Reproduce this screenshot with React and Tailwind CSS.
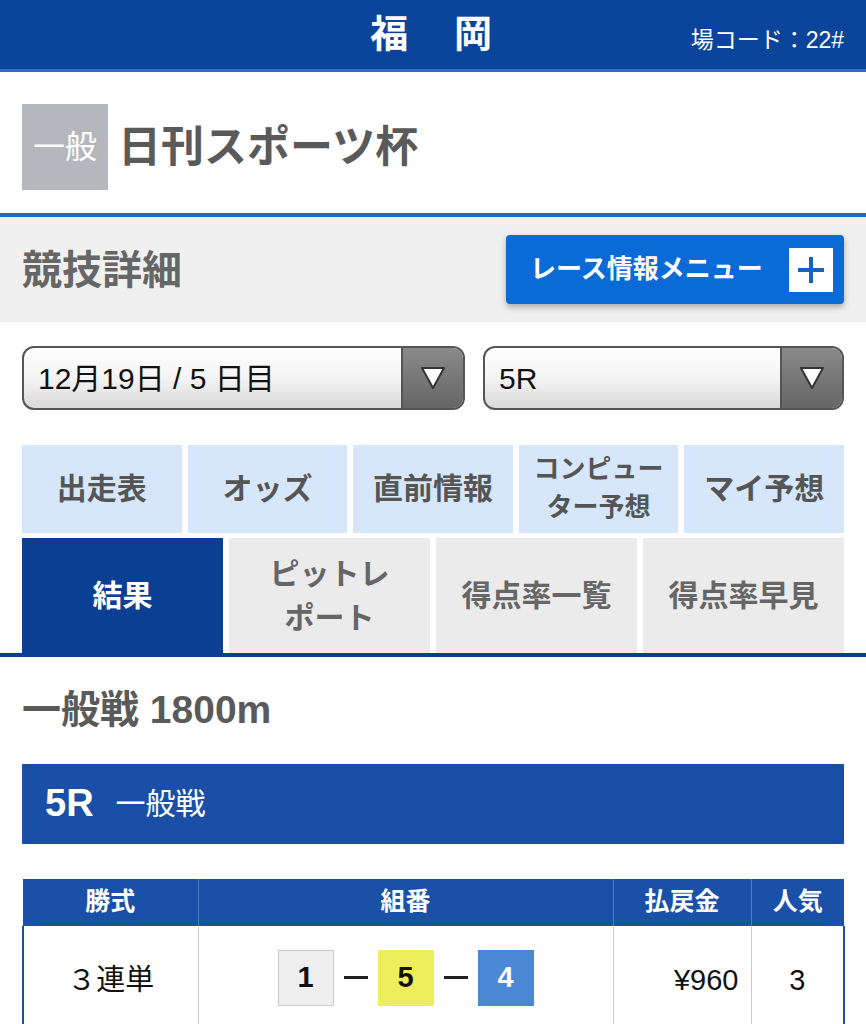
import React from "react";

const FONT = "font-['Liberation_Sans','Noto_Sans_CJK_JP',sans-serif]";

function Select({ label, className }) {
  return (
    <div
      className={`flex h-[64px] overflow-hidden rounded-[12px] border-2 border-[#555] bg-gradient-to-b from-white via-[#f4f4f4] to-[#d9d9d9] ${className}`}
    >
      <div className="flex flex-1 items-center pl-[14px] text-[30px] text-[#111]">{label}</div>
      <div className="flex w-[62px] items-center justify-center border-l-2 border-[#555] bg-gradient-to-b from-[#8a8a8a] to-[#666]">
        <svg width="28" height="26" viewBox="0 0 28 26">
          <polygon points="3,3 25,3 14,23" fill="#fff" stroke="#333" strokeWidth="2" strokeLinejoin="round" />
        </svg>
      </div>
    </div>
  );
}

function TabCell({ children, className = "" }) {
  return (
    <div className={`flex items-center justify-center text-center font-bold leading-[1.45] ${className}`}>
      {children}
    </div>
  );
}

export default function App() {
  return (
    <div className={`${FONT} w-[866px] bg-white`}>
      {/* Header */}
      <div className="relative flex h-[72px] items-center justify-center border-b-[3px] border-[#2b6cc4] bg-[#0b459b]">
        <div className="text-[38px] font-bold tracking-[0.1em] text-white">福　岡</div>
        <div className="absolute right-[22px] top-[23px] text-[23px] text-white">場コード：22#</div>
      </div>

      {/* Race title */}
      <div className="flex items-center gap-[10px] px-[22px] pb-[23px] pt-[32px]">
        <div className="flex h-[86px] w-[86px] items-center justify-center bg-[#b5b7bc] text-[32px] text-white">
          一般
        </div>
        <div className="text-[43px] font-bold text-[#5a5a5a]">日刊スポーツ杯</div>
      </div>
      <div className="h-[4px] bg-[#1e69c4]" />

      {/* Section header */}
      <div className="flex h-[105px] items-center justify-between bg-[#f0f0f0] px-[22px]">
        <div className="text-[40px] font-bold text-[#666]">競技詳細</div>
        <div className="flex h-[69px] w-[338px] items-center justify-between rounded-[4px] bg-[#0a6bd7] pl-[24px] pr-[11px] shadow-[0_3px_6px_rgba(0,0,0,0.3)]">
          <span className="text-[26px] font-bold text-white">レース情報メニュー</span>
          <span className="flex h-[44px] w-[44px] items-center justify-center bg-white">
            <svg width="30" height="30" viewBox="0 0 30 30">
              <rect x="13" y="2" width="4" height="26" fill="#1463bf" />
              <rect x="2" y="13" width="26" height="4" fill="#1463bf" />
            </svg>
          </span>
        </div>
      </div>

      {/* Selects */}
      <div className="flex gap-[18px] px-[22px] pb-[35px] pt-[24px]">
        <Select label="12月19日 / 5 日目" className="w-[443px]" />
        <Select label="5R" className="flex-1" />
      </div>

      {/* Tabs */}
      <div className="px-[22px]">
        <div className="grid h-[88px] grid-cols-5 gap-[6px] text-[30px] text-[#555]">
          <TabCell className="bg-[#d6e7fb]">出走表</TabCell>
          <TabCell className="bg-[#d6e7fb]">オッズ</TabCell>
          <TabCell className="bg-[#d6e7fb]">直前情報</TabCell>
          <TabCell className="bg-[#d6e7fb] text-[26px] leading-[1.2]">
            コンピュー
            <br />
            ター予想
          </TabCell>
          <TabCell className="bg-[#d6e7fb]">マイ予想</TabCell>
        </div>
        <div className="mt-[5px] grid h-[115px] grid-cols-4 gap-[6px] text-[30px] text-[#666]">
          <TabCell className="bg-[#0b3f93] text-white">結果</TabCell>
          <TabCell className="bg-[#ebebeb]">
            ピットレ
            <br />
            ポート
          </TabCell>
          <TabCell className="bg-[#ebebeb]">得点率一覧</TabCell>
          <TabCell className="bg-[#ebebeb]">得点率早見</TabCell>
        </div>
      </div>
      <div className="h-[4px] bg-[#0b3f93]" />

      {/* Race info */}
      <div className="px-[22px] pb-[24px] pt-[24px]">
        <div className="text-[39px] font-bold text-[#5a5a5a]">一般戦 1800m</div>
      </div>

      <div className="mx-[22px] flex h-[80px] items-center gap-[22px] bg-[#1a4fa8] px-[23px]">
        <span className="text-[38px] font-bold text-white">5R</span>
        <span className="text-[30px] text-white">一般戦</span>
      </div>

      {/* Result table */}
      <div className="mx-[22px] mt-[35px]">
        <table className="w-full table-fixed border-collapse">
          <colgroup>
            <col className="w-[175px]" />
            <col className="w-[415px]" />
            <col className="w-[138px]" />
            <col className="w-[93px]" />
          </colgroup>
          <thead>
            <tr className="h-[47px] bg-[#1a50a8] text-[25px] font-bold text-white">
              <th className="border-r border-[#4a80cc] font-bold">勝式</th>
              <th className="border-r border-[#4a80cc] font-bold">組番</th>
              <th className="border-r border-[#4a80cc] font-bold">払戻金</th>
              <th className="font-bold">人気</th>
            </tr>
          </thead>
          <tbody>
            <tr className="h-[110px] text-[29px] text-[#111]">
              <td className="border-l-2 border-r border-l-[#1a50a8] border-r-[#ccc] text-center">３連単</td>
              <td className="border-r border-[#ccc]">
                <div className="flex items-center justify-center gap-[10px] pb-[6px]">
                  <span className="flex h-[56px] w-[56px] items-center justify-center border border-[#ccc] bg-[#eeeeee] font-bold">1</span>
                  <span className="h-[3px] w-[24px] bg-[#222]" />
                  <span className="flex h-[56px] w-[56px] items-center justify-center bg-[#eeee5c] font-bold">5</span>
                  <span className="h-[3px] w-[24px] bg-[#222]" />
                  <span className="flex h-[56px] w-[56px] items-center justify-center bg-[#4a88d6] font-bold text-white">4</span>
                </div>
              </td>
              <td className="border-r border-[#ccc] pr-[12px] text-right">¥960</td>
              <td className="border-r-2 border-[#1a50a8] text-center">3</td>
            </tr>
          </tbody>
        </table>
      </div>
    </div>
  );
}
